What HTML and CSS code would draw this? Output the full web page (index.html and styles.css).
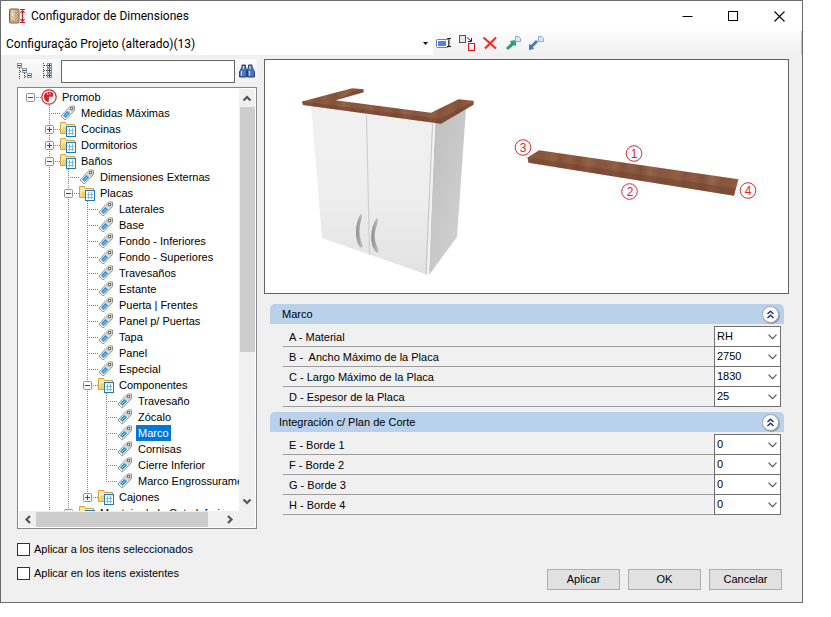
FILE: index.html
```html
<!DOCTYPE html>
<html lang="es">
<head>
    <meta charset="UTF-8">
    <meta name="viewport" content="width=device-width, initial-scale=1.0">
    <title>Configurador de Dimensiones</title>
    <link rel="stylesheet" href="styles.css">
</head>
<body>
    <!-- shared icons -->
    <svg class="defs" width="0" height="0">
        <symbol id="tag" viewBox="0 0 16 16">
            <path d="M1 11 L9 2.500 L10.500 1 H14.500 V5.500 L6 14.500 L4.500 14.500 Z" fill="#f6f6f6" stroke="#8f8f8f" stroke-linejoin="round"/>
            <path d="M9 3 L10.500 1.500 H14 V5.500 L11.500 8 L7.500 4.700 Z" fill="#cfcfcf"/>
            <rect x="10.500" y="2.500" width="2" height="2" fill="#fff" stroke="#777"/>
            <path d="M3 10.500 L7.500 5.700 L10.300 8.300 L5.500 13 Z" fill="#2f93d6"/>
            <path d="M5 11 L8.500 7.500" stroke="#8cc8f0"/>
        </symbol>
        <symbol id="folder" viewBox="0 0 16 16">
            <path d="M0.500 12.500 V1.500 H5.500 L6.500 3.500 H14.500 V12.500 Z" fill="#ffe9a8" stroke="#d8a040"/>
            <path d="M1 12 L3 6.500 H13 V12 Z" fill="#f8cf6c"/>
            <rect x="6.500" y="5.500" width="9" height="10" fill="#fff" stroke="#1a7cb8"/>
            <path d="M8 9.500 H14 M8 12.500 H14 M9.500 7 V14 M12.500 7 V14" stroke="#8ab8da"/>
        </symbol>
        <symbol id="promob" viewBox="0 0 16 16">
            <circle cx="8" cy="8" r="7.200" fill="#fff" stroke="#d0282e" stroke-width="1.200"/>
            <path d="M7.500 13.500 C3 12 2 8 3.500 5 C6 2 11 2 12.500 5 L11.500 8 L8.500 7.500 L8 9.500 Z" fill="#d0282e"/>
            <path d="M6 3 L7 6 M9 3.500 V6" stroke="#f3b0b0"/>
        </symbol>
        <symbol id="plus" viewBox="0 0 9 9">
            <rect x="0.500" y="0.500" width="8" height="8" rx="1" fill="#fafafa" stroke="#919191"/>
            <path d="M2 4.500 H7 M4.500 2 V7" stroke="#2b4a9b"/>
        </symbol>
        <symbol id="minus" viewBox="0 0 9 9">
            <rect x="0.500" y="0.500" width="8" height="8" rx="1" fill="#fafafa" stroke="#919191"/>
            <path d="M2 4.500 H7" stroke="#2b4a9b"/>
        </symbol>
        <symbol id="chevron" viewBox="0 0 9 6">
            <path d="M0.500 0.700 L4.500 4.700 L8.500 0.700" fill="none" stroke="#555" stroke-width="1.200"/>
        </symbol>
        <symbol id="arrow" viewBox="0 0 10 7">
            <path d="M1.500 1.500 L5 5 L8.500 1.500" fill="none" stroke="#555" stroke-width="2.200"/>
        </symbol>
        <symbol id="collapse" viewBox="0 0 9 9">
            <path d="M1.500 4 L4.500 1.200 L7.500 4 M1.500 8 L4.500 5.200 L7.500 8" fill="none" stroke="#1f2f66" stroke-width="1.400"/>
        </symbol>
    </svg>

    <div class="window">
        <header class="titlebar">
            <svg class="app-icon" viewBox="0 0 17 17">
                <rect x="0.500" y="1" width="9.500" height="14" rx="1" fill="#c9a983" stroke="#7d6449"/>
                <rect x="2" y="2" width="4" height="10" fill="#dcc3a3"/>
                <path d="M3.500 5 V8" stroke="#fff"/>
                <path d="M11 1.500 H16 M11 14.500 H16 M13.500 2 V14 M11.500 5 L13.500 2.500 L15.500 5 M11.500 11 L13.500 13.500 L15.500 11" fill="none" stroke="#d8142c" stroke-width="1.200"/>
            </svg>
            <h1>Configurador de Dimensiones</h1>
            <button class="caption" aria-label="Minimizar"><svg viewBox="0 0 11 11"><path d="M0.500 5.500 H10.500" stroke="#000"/></svg></button>
            <button class="caption" aria-label="Maximizar"><svg viewBox="0 0 11 11"><rect x="0.500" y="0.500" width="9" height="9" fill="none" stroke="#000"/></svg></button>
            <button class="caption" aria-label="Cerrar"><svg viewBox="0 0 11 11"><path d="M0.500 0.500 L10.500 10.500 M10.500 0.500 L0.500 10.500" stroke="#000" stroke-width="1.100"/></svg></button>
        </header>

        <div class="toolbar">
            <button class="profile"><span>Configuração Projeto (alterado)(13)</span><svg viewBox="0 0 5 3"><path d="M0 0 H5 L2.500 3 Z"/></svg></button>
            <button class="tool" aria-label="Renombrar">
                <svg viewBox="0 0 16 16">
                    <rect x="0.500" y="4.500" width="12" height="8" rx="1" fill="#fff" stroke="#6e7f9e"/>
                    <rect x="2" y="6" width="8" height="5" fill="#4d86e4"/>
                    <path d="M11 3.500 H15 M11 11.500 H15 M13 4 V11" stroke="#222"/>
                </svg>
            </button>
            <button class="tool" aria-label="Copiar">
                <svg viewBox="0 0 16 16">
                    <rect x="0.500" y="0.500" width="6" height="7" fill="#e8e8e8" stroke="#555"/>
                    <rect x="9.500" y="8.500" width="6" height="7" fill="#f2f2f2" stroke="#e01414"/>
                    <path d="M8 2.500 L12 6 M12.500 3 V6.500 H9" fill="none" stroke="#14206e"/>
                </svg>
            </button>
            <button class="tool" aria-label="Eliminar">
                <svg viewBox="0 0 16 16"><path d="M1.500 2.500 L14 13.500 M14 2.500 L3 13.500" stroke="#f03030" stroke-width="2.200"/></svg>
            </button>
            <button class="tool" aria-label="Exportar">
                <svg viewBox="0 0 16 16">
                    <path d="M1 13 L6 8 L5 6 L11 5 V11 L9 10 L3 15 Z" fill="#2ca070"/>
                    <path d="M10.500 1.500 H13.500 L15.500 3.500 V6.500 H10.500 Z" fill="#dbe9fa" stroke="#86a9d6"/>
                </svg>
            </button>
            <button class="tool" aria-label="Importar">
                <svg viewBox="0 0 16 16">
                    <path d="M1 9 L3 10 L8 5 L10 7 L5 12 L6 14 L1 15 Z" fill="#3c7cc8"/>
                    <path d="M10.500 1.500 H13.500 L15.500 3.500 V6.500 H10.500 Z" fill="#dbe9fa" stroke="#86a9d6"/>
                </svg>
            </button>
        </div>

        <main>
            <aside>
                <div class="search">
                    <button class="search-tool" aria-label="Contraer todo">
                        <svg viewBox="0 0 16 16">
                            <path d="M2.500 5 V16 M3 8.500 H5 M7.500 10 V16 M8 13.500 H10" stroke="#444" stroke-dasharray="1 1"/>
                            <g fill="#f4f8fc" stroke="#8494a4"><rect x="0.500" y="0.500" width="4" height="4"/><rect x="5.500" y="5.500" width="4" height="4"/><rect x="10.500" y="10.500" width="4" height="4"/></g>
                            <path d="M1 2.500 H4 M6 7.500 H9 M11 12.500 H14" stroke="#345"/>
                        </svg>
                    </button>
                    <button class="search-tool" aria-label="Expandir todo">
                        <svg viewBox="0 0 16 16">
                            <path d="M4.500 0 V16 M5 2.500 H8 M5 7.500 H8 M5 12.500 H8" stroke="#444" stroke-dasharray="1 1"/>
                            <g fill="#f4f8fc" stroke="#8494a4"><rect x="8.500" y="0.500" width="4" height="4"/><rect x="8.500" y="5.500" width="4" height="4"/><rect x="8.500" y="10.500" width="4" height="4"/></g>
                            <path d="M9 2.500 H12 M9 7.500 H12 M9 12.500 H12 M10.500 1 V4 M10.500 6 V9 M10.500 11 V14" stroke="#345"/>
                        </svg>
                    </button>
                    <input type="text" aria-label="Buscar">
                    <button class="search-tool" aria-label="Buscar">
                        <svg viewBox="0 0 16 16">
                            <path d="M3 2 H6.500 V4 L7.500 7 V14 H0.500 V9 L3 4 Z M9.500 2 H13 V4 L15.500 9 V14 H8.500 V7 L9.500 4 Z" fill="#4d74b8" stroke="#24427e"/>
                            <path d="M2.500 8 V12.500 M10.500 8 V12.500 M4.500 3 V6 M11 3 V6" stroke="#cfe0f8" stroke-width="1.200"/>
                        </svg>
                    </button>
                </div>

                <div class="tree-box">
                    <div class="tree">
                        <ul class="root">
                            <li><div class="node"><span class="slot"><svg><use href="#minus"/></svg></span><svg class="icon"><use href="#promob"/></svg><span class="text">Promob</span></div>
                                <ul>
                                    <li><div class="node"><span class="slot"></span><svg class="icon"><use href="#tag"/></svg><span class="text">Medidas Máximas</span></div></li>
                                    <li><div class="node"><span class="slot"><svg><use href="#plus"/></svg></span><svg class="icon"><use href="#folder"/></svg><span class="text">Cocinas</span></div></li>
                                    <li><div class="node"><span class="slot"><svg><use href="#plus"/></svg></span><svg class="icon"><use href="#folder"/></svg><span class="text">Dormitorios</span></div></li>
                                    <li><div class="node"><span class="slot"><svg><use href="#minus"/></svg></span><svg class="icon"><use href="#folder"/></svg><span class="text">Baños</span></div>
                                        <ul>
                                            <li><div class="node"><span class="slot"></span><svg class="icon"><use href="#tag"/></svg><span class="text">Dimensiones Externas</span></div></li>
                                            <li><div class="node"><span class="slot"><svg><use href="#minus"/></svg></span><svg class="icon"><use href="#folder"/></svg><span class="text">Placas</span></div>
                                                <ul>
                                                    <li><div class="node"><span class="slot"></span><svg class="icon"><use href="#tag"/></svg><span class="text">Laterales</span></div></li>
                                                    <li><div class="node"><span class="slot"></span><svg class="icon"><use href="#tag"/></svg><span class="text">Base</span></div></li>
                                                    <li><div class="node"><span class="slot"></span><svg class="icon"><use href="#tag"/></svg><span class="text">Fondo - Inferiores</span></div></li>
                                                    <li><div class="node"><span class="slot"></span><svg class="icon"><use href="#tag"/></svg><span class="text">Fondo - Superiores</span></div></li>
                                                    <li><div class="node"><span class="slot"></span><svg class="icon"><use href="#tag"/></svg><span class="text">Travesaños</span></div></li>
                                                    <li><div class="node"><span class="slot"></span><svg class="icon"><use href="#tag"/></svg><span class="text">Estante</span></div></li>
                                                    <li><div class="node"><span class="slot"></span><svg class="icon"><use href="#tag"/></svg><span class="text">Puerta | Frentes</span></div></li>
                                                    <li><div class="node"><span class="slot"></span><svg class="icon"><use href="#tag"/></svg><span class="text">Panel p/ Puertas</span></div></li>
                                                    <li><div class="node"><span class="slot"></span><svg class="icon"><use href="#tag"/></svg><span class="text">Tapa</span></div></li>
                                                    <li><div class="node"><span class="slot"></span><svg class="icon"><use href="#tag"/></svg><span class="text">Panel</span></div></li>
                                                    <li><div class="node"><span class="slot"></span><svg class="icon"><use href="#tag"/></svg><span class="text">Especial</span></div></li>
                                                    <li><div class="node"><span class="slot"><svg><use href="#minus"/></svg></span><svg class="icon"><use href="#folder"/></svg><span class="text">Componentes</span></div>
                                                        <ul>
                                                            <li><div class="node"><span class="slot"></span><svg class="icon"><use href="#tag"/></svg><span class="text">Travesaño</span></div></li>
                                                            <li><div class="node"><span class="slot"></span><svg class="icon"><use href="#tag"/></svg><span class="text">Zócalo</span></div></li>
                                                            <li><div class="node"><span class="slot"></span><svg class="icon"><use href="#tag"/></svg><span class="text selected">Marco</span></div></li>
                                                            <li><div class="node"><span class="slot"></span><svg class="icon"><use href="#tag"/></svg><span class="text">Cornisas</span></div></li>
                                                            <li><div class="node"><span class="slot"></span><svg class="icon"><use href="#tag"/></svg><span class="text">Cierre Inferior</span></div></li>
                                                            <li><div class="node"><span class="slot"></span><svg class="icon"><use href="#tag"/></svg><span class="text">Marco Engrossurame</span></div></li>
                                                        </ul>
                                                    </li>
                                                    <li><div class="node"><span class="slot"><svg><use href="#plus"/></svg></span><svg class="icon"><use href="#folder"/></svg><span class="text">Cajones</span></div></li>
                                                </ul>
                                            </li>
                                            <li><div class="node"><span class="slot"><svg><use href="#plus"/></svg></span><svg class="icon"><use href="#folder"/></svg><span class="text">Montaje de la Cota Inferior</span></div></li>
                                            <li></li>
                                        </ul>
                                    </li>
                                    <li></li>
                                </ul>
                            </li>
                        </ul>
                    </div>
                    <div class="vscroll">
                        <svg class="up"><use href="#arrow"/></svg>
                        <div class="thumb"></div>
                        <svg class="down"><use href="#arrow"/></svg>
                    </div>
                    <div class="hscroll">
                        <svg class="left"><use href="#arrow"/></svg>
                        <div class="thumb"></div>
                        <svg class="right"><use href="#arrow"/></svg>
                    </div>
                </div>

                <div class="options">
                    <label><input type="checkbox"> Aplicar a los itens seleccionados</label>
                    <label><input type="checkbox"> Aplicar en los itens existentes</label>
                </div>
            </aside>

            <section class="content">
                <div class="preview">
                    <svg viewBox="265 60 523 233">
                        <defs>
                            <linearGradient id="door" x1="0" y1="0" x2="0" y2="1"><stop offset="0" stop-color="#f0f0f1"/><stop offset="0.500" stop-color="#efeff0"/><stop offset="1" stop-color="#e2e2e3"/></linearGradient>
                            <linearGradient id="side" x1="0" y1="0" x2="1" y2="1"><stop offset="0" stop-color="#bdbdbe"/><stop offset="1" stop-color="#d4d4d5"/></linearGradient>
                            <linearGradient id="handle" x1="0" y1="0" x2="1" y2="0"><stop offset="0" stop-color="#8a8a8a"/><stop offset="1" stop-color="#c8c8c8"/></linearGradient>
                            <linearGradient id="wood" gradientUnits="userSpaceOnUse" spreadMethod="repeat" x1="300" y1="100" x2="362" y2="108">
                                <stop offset="0" stop-color="#8a583f"/><stop offset="0.150" stop-color="#935f45"/><stop offset="0.250" stop-color="#84523a"/><stop offset="0.400" stop-color="#8f5c43"/><stop offset="0.550" stop-color="#815038"/><stop offset="0.700" stop-color="#966348"/><stop offset="0.850" stop-color="#87553c"/><stop offset="1" stop-color="#8a583f"/>
                            </linearGradient>
                        </defs>
                        <path d="M311 106 L435 123 L428 275 L322 238 Z" fill="url(#door)"/>
                        <path d="M435 123 L466 109 L457 237 L429 275 Z" fill="url(#side)"/>
                        <path d="M434.500 124 L427.500 274" stroke="#f2f2f2" stroke-width="1.500"/>
                        <path d="M432.500 124 L426 274" stroke="#b9b9ba" stroke-width="0.800"/>
                        <path d="M366.500 115 L369.500 254.500" stroke="#cfcfd0" stroke-width="1.200"/>
                        <path d="M361 214 C355 222 354 241 361 248 L363 246 L361 241 C359 235 359 227 361 221 L362 216 Z" fill="url(#handle)"/>
                        <path d="M377 218 C370 227 369 246 377 253 L379 251 L377 246 C374 240 374 232 377 225 L378 220 Z" fill="url(#handle)"/>
                        <path d="M302 101.500 L352 88.300 L363.500 89.300 V92.300 L335.500 100.300 L431 112.700 L458.500 99.300 L473.500 100.700 V104.700 L441 123.700 L303 105 Z" fill="url(#wood)"/>
                        <path d="M302 101.500 L441 118.700 L473.500 100.700 V104.700 L441 123.700 L303 105 Z M352 92 L363.500 89.300 V92.300 L336 100.300 Z" fill="#6c3d2a" opacity="0.400"/>
                        <path d="M527.500 157.500 L539 150.300 L738.500 179.300 L734 195.700 L528.500 162.700 Z" fill="url(#wood)"/>
                        <path d="M527.500 157.500 L735.500 188.500 L734 195.700 L528.500 162.700 Z" fill="#6c3d2a" opacity="0.400"/>
                        <g fill="none" stroke="#e0262c">
                            <circle cx="523" cy="147.500" r="7.800"/><circle cx="634" cy="153.500" r="7.800"/><circle cx="629.500" cy="191.500" r="7.800"/><circle cx="748" cy="190.500" r="7.800"/>
                        </g>
                        <g class="mark">
                            <text x="523" y="152">3</text><text x="634" y="158">1</text><text x="630" y="196">2</text><text x="748" y="195">4</text>
                        </g>
                    </svg>
                </div>

                <div class="groups">
                    <fieldset>
                        <div class="group-head wide"><h2>Marco</h2><button class="collapse" aria-label="Contraer Marco"><svg><use href="#collapse"/></svg></button></div>
                        <div class="field"><label for="a">A - Material</label><span class="combo"><select id="a"><option>RH</option></select><svg><use href="#chevron"/></svg></span></div>
                        <div class="field"><label for="b">B -&nbsp; Ancho Máximo de la Placa</label><span class="combo"><select id="b"><option>2750</option></select><svg><use href="#chevron"/></svg></span></div>
                        <div class="field"><label for="c">C - Largo Máximo de la Placa</label><span class="combo"><select id="c"><option>1830</option></select><svg><use href="#chevron"/></svg></span></div>
                        <div class="field"><label for="d">D - Espesor de la Placa</label><span class="combo"><select id="d"><option>25</option></select><svg><use href="#chevron"/></svg></span></div>
                    </fieldset>
                    <fieldset>
                        <div class="group-head"><h2>Integración c/ Plan de Corte</h2><button class="collapse" aria-label="Contraer Integración"><svg><use href="#collapse"/></svg></button></div>
                        <div class="field"><label for="e">E - Borde 1</label><span class="combo"><select id="e"><option>0</option></select><svg><use href="#chevron"/></svg></span></div>
                        <div class="field"><label for="f">F - Borde 2</label><span class="combo"><select id="f"><option>0</option></select><svg><use href="#chevron"/></svg></span></div>
                        <div class="field"><label for="g">G - Borde 3</label><span class="combo"><select id="g"><option>0</option></select><svg><use href="#chevron"/></svg></span></div>
                        <div class="field"><label for="h">H - Borde 4</label><span class="combo"><select id="h"><option>0</option></select><svg><use href="#chevron"/></svg></span></div>
                    </fieldset>
                </div>

                <div class="actions">
                    <button>Aplicar</button>
                    <button>OK</button>
                    <button>Cancelar</button>
                </div>
            </section>
        </main>
    </div>
</body>
</html>
```
FILE: styles.css
```css
* {
    box-sizing: border-box;
}
body {
    margin: 0;
    padding: 0 28px 14px 0;
    height: 100vh;
    background: #fff;
    font: 11px/16px "Liberation Sans", Arial, sans-serif;
    color: #000;
}
button, input, select {
    font: inherit;
    color: inherit;
    margin: 0;
}
h1, h2 {
    margin: 0;
    font-weight: normal;
}
svg {
    display: block;
    flex: none;
}
.defs {
    position: absolute;
}
.window {
    display: flex;
    flex-direction: column;
    height: 100%;
    min-height: 603px;
    border: 1px solid #6b6b6b;
    background: #f0f0f0;
}

/* title bar */
.titlebar {
    display: flex;
    align-items: center;
    height: 30px;
    padding-left: 8px;
    background: #fff;
}
.titlebar h1 {
    flex: 1;
    margin-left: 5px;
    font: 12px/16px Roboto, "Noto Sans", sans-serif;
}
.app-icon {
    width: 17px;
    height: 17px;
}
.caption {
    display: flex;
    align-items: center;
    justify-content: center;
    width: 46px;
    height: 30px;
    padding: 0;
    border: none;
    background: none;
}
.caption svg {
    width: 11px;
    height: 11px;
}

/* toolbar */
.toolbar {
    display: flex;
    align-items: center;
    height: 24px;
    border-right: 1px solid #c4c4c4;
    background: linear-gradient(#fdfdfd, #f0f0f0);
}
.profile {
    display: flex;
    align-items: center;
    justify-content: space-between;
    width: 432px;
    height: 24px;
    padding: 1px 5px 0 5px;
    border: none;
    background: #fff;
    font: 12px/16px Roboto, "Noto Sans", sans-serif;
}
.profile svg {
    width: 5px;
    height: 3px;
}
.tool {
    width: 23px;
    height: 22px;
    padding: 3px;
    border: none;
    background: none;
}
.tool svg {
    width: 16px;
    height: 16px;
}

main {
    display: grid;
    grid-template-columns: 240px 1fr;
    column-gap: 7px;
    flex: 1;
    min-height: 0;
    padding: 4px 13px 12px 16px;
}
aside, .content {
    display: flex;
    flex-direction: column;
    min-width: 0;
    min-height: 0;
}

/* search row */
.search {
    display: flex;
    align-items: center;
    height: 24px;
    background: linear-gradient(#fafafa, #f0f0f0);
}
.search-tool {
    width: 22px;
    height: 22px;
    padding: 0;
    border: none;
    background: none;
}
.search-tool svg {
    width: 16px;
    height: 16px;
}
.search input {
    flex: 1;
    min-width: 0;
    height: 23px;
    margin-right: 4px;
    padding: 0 4px;
    border: 1px solid #646464;
    background: #fff;
}
.search input + .search-tool {
    width: 18px;
}

/* tree */
.tree-box {
    display: grid;
    grid-template: 1fr 16px / 1fr 16px;
    flex: 1;
    min-height: 0;
    margin-top: 4px;
    padding: 1px;
    border: 1px solid #828790;
    background: #fff;
}
.tree {
    overflow: hidden;
    min-height: 0;
}
.tree ul {
    margin: 0;
    padding: 0 0 0 19px;
    list-style: none;
}
.tree ul.root {
    padding-left: 2px;
}
.tree li {
    background: repeating-linear-gradient(#808080 0 1px, transparent 1px 2px) 9px 0 / 1px 100% no-repeat;
}
.tree .root > li {
    background: none;
}
.tree li:last-child {
    background-size: 1px 8px;
}
.node {
    display: flex;
    align-items: center;
    height: 16px;
    white-space: nowrap;
}
.slot {
    display: flex;
    flex: none;
    align-items: center;
    width: 20px;
    height: 16px;
    padding-left: 5px;
    background: repeating-linear-gradient(90deg, #808080 0 1px, transparent 1px 2px) 9px 8px / 11px 1px no-repeat;
}
.slot svg {
    width: 9px;
    height: 9px;
}
.icon {
    width: 16px;
    height: 16px;
}
.text {
    margin-left: 3px;
    padding: 0 2px;
    height: 16px;
}
.selected {
    background: #0078d7;
    color: #fff;
}
.vscroll, .hscroll {
    display: flex;
    align-items: center;
    background: #f0f0f0;
}
.vscroll {
    flex-direction: column;
    justify-content: space-between;
    padding: 6px 0;
}
.vscroll .thumb {
    width: 15px;
    flex: 0 0 245px;
    margin: 5px 0 auto;
    background: #cdcdcd;
}
.hscroll {
    grid-column: 1 / 3;
    padding: 0 20px 0 4px;
}
.hscroll .thumb {
    flex: 0 0 172px;
    height: 15px;
    margin: 0 auto 0 3px;
    background: #cdcdcd;
}
.vscroll svg, .hscroll svg {
    width: 10px;
    height: 7px;
}
.up {
    transform: rotate(180deg);
}
.left {
    transform: rotate(90deg);
}
.right {
    transform: rotate(-90deg);
}

/* check boxes */
.options {
    display: flex;
    flex-direction: column;
    gap: 8px;
    padding: 12px 0 9px;
}
.options label {
    display: flex;
    align-items: center;
    gap: 4px;
}
.options input {
    appearance: none;
    width: 13px;
    height: 13px;
    border: 1px solid #333;
    background: #fff;
}

/* preview */
.preview {
    border: 1px solid #646464;
    background: #fff;
}
.preview > svg {
    width: 100%;
    height: 233px;
}
.mark {
    font-size: 12px;
    text-anchor: middle;
    fill: #e0262c;
}

/* property groups */
.groups {
    display: flex;
    flex-direction: column;
    gap: 5px;
    margin: 10px 5px 0 6px;
}
fieldset {
    min-width: 0;
    margin: 0;
    padding: 0;
    border: none;
}
.group-head {
    display: flex;
    align-items: center;
    justify-content: space-between;
    height: 20px;
    margin-bottom: 3px;
    padding: 0 5px 0 9px;
    border-radius: 5px 5px 0 0;
    background: #b9d1ea;
}
.group-head.wide {
    padding-left: 12px;
}
.group-head h2 {
    font-size: 11px;
}
.collapse {
    display: flex;
    align-items: center;
    justify-content: center;
    width: 17px;
    height: 17px;
    padding: 0;
    border: 1px solid #9aa3b5;
    border-radius: 50%;
    background: #fff;
    box-shadow: 1px 1px 1px #8c98ac;
}
.collapse svg {
    width: 9px;
    height: 9px;
}
.field {
    display: flex;
    align-items: center;
    height: 20px;
    margin: 0 3px 0 13px;
    padding-left: 6px;
    border-bottom: 1px solid #9d9d9d;
}
.field label {
    flex: 1;
}
.combo {
    position: relative;
}
.combo select {
    display: block;
    appearance: none;
    width: 67px;
    height: 21px;
    padding: 0 0 2px 2px;
    border: 1px solid #707070;
    border-radius: 0;
    background: #fff;
}
.combo svg {
    position: absolute;
    right: 4px;
    top: 8px;
    width: 9px;
    height: 6px;
    pointer-events: none;
}

/* buttons */
.actions {
    display: flex;
    justify-content: flex-end;
    gap: 8px;
    margin-top: auto;
    padding-right: 7px;
}
.actions button {
    width: 73px;
    height: 21px;
    padding: 0 0 2px;
    border: 1px solid #adadad;
    background: #e1e1e1;
}
```
